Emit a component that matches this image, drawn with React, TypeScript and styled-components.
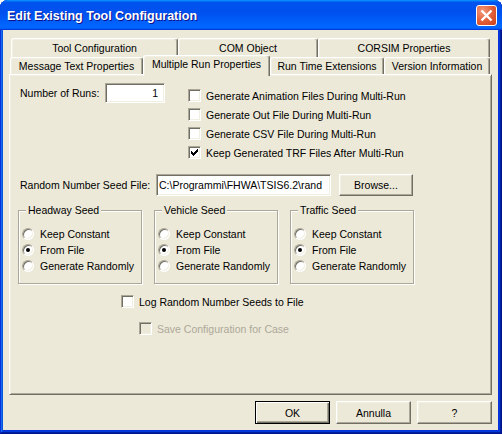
import React from "react";
import styled, { createGlobalStyle, css } from "styled-components";

const face = "#ECE9D8";
const light = "#F1EFE2";
const shadow = "#ACA899";
const dark = "#716F64";
const UI_FONT = `"Liberation Sans", Arial, sans-serif`;

const GlobalStyle = createGlobalStyle`
  html, body { margin: 0; padding: 0; background: #ffffff; }
  body { font-family: ${UI_FONT}; font-size: 10.5px; color: #000; }
  * { box-sizing: border-box; }
`;

const Window = styled.div`
  width: 502px;
  height: 434px;
  display: flex;
  flex-direction: column;
  background: #0831d9;
  border-radius: 8px 8px 0 0;
  overflow: hidden;
  box-shadow: inset -1px -1px #00138c, inset 1px 1px #0831d9, inset -2px -2px #001ea0,
    inset 2px 2px #166aee, inset -3px -3px #003bda, inset 3px 3px #0855dd;
`;

const TitleBar = styled.div`
  height: 30px;
  flex: none;
  display: flex;
  align-items: center;
  justify-content: space-between;
  padding: 0 5px 0 7px;
  background: linear-gradient(
    180deg,
    #0997ff,
    #0053ee 8%,
    #0050ee 40%,
    #0066ff 88%,
    #0066ff 93%,
    #005bff 95%,
    #003dd7 96%,
    #003dd7
  );
`;

const Title = styled.span`
  font: bold 12.5px ${UI_FONT};
  color: #fff;
  text-shadow: 1px 1px #0f1089;
  margin-top: 2px;
  white-space: nowrap;
`;

const CloseButton = styled.div`
  width: 21px;
  height: 21px;
  border: 1px solid #fff;
  border-radius: 3px;
  background: radial-gradient(circle at 30% 28%, #f39a7c 0%, #e2603a 50%, #cc4118 100%);
  display: flex;
  align-items: center;
  justify-content: center;
`;

const Body = styled.div`
  flex: 1;
  margin: 0 4px 4px 3px;
  background: ${face};
  display: flex;
  flex-direction: column;
  padding: 8px 6px 0;
`;

const TabRow = styled.div<{ $indent: number; $h: number }>`
  display: flex;
  flex: none;
  height: ${(p) => p.$h}px;
  margin-left: ${(p) => p.$indent}px;
`;

const Tab = styled.div<{ $w: number; $sel?: boolean }>`
  width: ${(p) => p.$w}px;
  flex: none;
  display: flex;
  align-items: center;
  justify-content: center;
  white-space: nowrap;
  background: ${face};
  border-left: 1px solid #fff;
  border-top: 1px solid #fff;
  border-right: 1px solid ${dark};
  border-radius: 3px 3px 0 0;
  box-shadow: inset -1px 0 ${shadow}, inset 1px 1px ${light};
  ${(p) =>
    p.$sel &&
    css`
      position: relative;
      z-index: 1;
      margin-top: -2px;
      margin-bottom: -2px;
      padding-bottom: 4px;
    `}
`;

const Panel = styled.div`
  flex: none;
  height: 321px;
  border: 1px solid;
  border-color: #fff ${dark} ${dark} #fff;
  box-shadow: inset 1px 1px ${light}, inset -1px -1px ${shadow};
  display: flex;
  flex-direction: column;
  align-items: flex-start;
`;

const RunsRow = styled.div`
  display: flex;
  align-items: flex-start;
  margin: 8px 0 0 10px;
`;

const FieldLabel = styled.span<{ $w: number }>`
  width: ${(p) => p.$w}px;
  flex: none;
  display: flex;
  align-items: center;
  align-self: stretch;
  white-space: nowrap;
`;

const LabeledField = styled.div<{ $h: number }>`
  display: flex;
  align-items: center;
  height: ${(p) => p.$h}px;
`;

const TextBox = styled.input<{ $w: number; $h: number; $right?: boolean }>`
  width: ${(p) => p.$w}px;
  height: ${(p) => p.$h}px;
  flex: none;
  font: 10.5px ${UI_FONT};
  color: #000;
  background: #fff;
  border: 1px solid;
  border-color: ${shadow} #fff #fff ${shadow};
  box-shadow: inset 1px 1px ${dark}, inset -1px -1px ${light};
  padding: ${(p) => (p.$right ? "0 6px 0 2px" : "0 1px 0 2px")};
  text-align: ${(p) => (p.$right ? "right" : "left")};
  outline: none;
  margin: 0;
`;

const CheckList = styled.div`
  display: flex;
  flex-direction: column;
  gap: 6px;
  margin: 6px 0 0 23px;
`;

const OptionLine = styled.div<{ $top: number; $indent: number }>`
  margin: ${(p) => p.$top}px 0 0 ${(p) => p.$indent}px;
`;

const CheckRow = styled.label<{ $disabled?: boolean }>`
  display: flex;
  align-items: center;
  gap: 5px;
  height: 13px;
  white-space: nowrap;
  color: ${(p) => (p.$disabled ? shadow : "#000")};
`;

const Box = styled.span<{ $disabled?: boolean }>`
  width: 13px;
  height: 13px;
  flex: none;
  display: flex;
  align-items: center;
  justify-content: center;
  border: 1px solid;
  border-color: ${shadow} #fff #fff ${shadow};
  box-shadow: inset 1px 1px ${dark}, inset -1px -1px ${light};
  background: ${(p) => (p.$disabled ? face : "#fff")};
`;

const SeedRow = styled.div`
  display: flex;
  align-items: center;
  height: 22px;
  margin: 15px 0 0 10px;
`;

const PushButton = styled.button<{ $w: number; $h: number; $default?: boolean }>`
  width: ${(p) => p.$w}px;
  height: ${(p) => p.$h}px;
  flex: none;
  font: 10.5px ${UI_FONT};
  color: #000;
  background: ${face};
  padding: 0;
  margin: 0;
  border: 1px solid;
  border-color: #fff ${dark} ${dark} #fff;
  box-shadow: inset -1px -1px ${shadow}, inset 1px 1px ${light};
  ${(p) =>
    p.$default &&
    css`
      border-color: #000;
      box-shadow: inset 1px 1px #fff, inset -1px -1px ${dark}, inset -2px -2px ${shadow};
    `}
`;

const BrowseButton = styled(PushButton)`
  margin-left: 8px;
`;

const GroupRow = styled.div`
  display: flex;
  gap: 12px;
  margin: 8px 0 0 8px;
`;

const Group = styled.div`
  width: 124px;
  height: 74px;
  margin-top: 6px;
  border: 1px solid ${shadow};
  box-shadow: inset 1px 1px #fff, 1px 1px #fff;
  padding-left: 3px;
  display: flex;
  flex-direction: column;
`;

const GroupTitle = styled.span`
  align-self: flex-start;
  margin: -7px 0 0 4px;
  padding: 0 2px;
  line-height: 12px;
  background: ${face};
  white-space: nowrap;
`;

const RadioList = styled.div`
  display: flex;
  flex-direction: column;
  margin-top: 10px;
`;

const RadioRow = styled.label`
  display: flex;
  align-items: center;
  gap: 6px;
  height: 16px;
  white-space: nowrap;
`;

const RadioDot = styled.span<{ $checked?: boolean }>`
  width: 12px;
  height: 12px;
  flex: none;
  border-radius: 50%;
  border: 1px solid;
  border-color: ${shadow} #fff #fff ${shadow};
  box-shadow: inset 1px 1px ${dark}, inset -1px -1px ${light};
  background: #fff;
  display: flex;
  align-items: center;
  justify-content: center;
  &::after {
    content: "";
    width: 4px;
    height: 4px;
    border-radius: 50%;
    background: #000;
    display: ${(p) => (p.$checked ? "block" : "none")};
  }
`;

const ButtonRow = styled.div`
  display: flex;
  justify-content: flex-end;
  gap: 6px;
  margin-top: 6px;
`;

const CHECK_PIXELS: [number, number][] = [
  [6, 0],
  [5, 1], [6, 1],
  [0, 2], [4, 2], [5, 2], [6, 2],
  [0, 3], [1, 3], [3, 3], [4, 3], [5, 3],
  [0, 4], [1, 4], [2, 4], [3, 4], [4, 4],
  [1, 5], [2, 5], [3, 5],
  [2, 6],
];
const CHECK_PATH = CHECK_PIXELS.map(([x, y]) => `M${x} ${y}h1v1h-1z`).join("");

function CheckMark({ color }: { color: string }) {
  return (
    <svg width="7" height="7" viewBox="0 0 7 7" shapeRendering="crispEdges">
      <path d={CHECK_PATH} fill={color} />
    </svg>
  );
}

function CheckOption({
  label,
  checked,
  disabled,
}: {
  label: string;
  checked?: boolean;
  disabled?: boolean;
}) {
  return (
    <CheckRow $disabled={disabled}>
      <Box $disabled={disabled}>{checked && <CheckMark color={disabled ? shadow : "#000"} />}</Box>
      <span>{label}</span>
    </CheckRow>
  );
}

function SeedGroup({ title }: { title: string }) {
  const options = ["Keep Constant", "From File", "Generate Randomly"];
  return (
    <Group>
      <GroupTitle>{title}</GroupTitle>
      <RadioList>
        {options.map((o) => (
          <RadioRow key={o}>
            <RadioDot $checked={o === "From File"} />
            <span>{o}</span>
          </RadioRow>
        ))}
      </RadioList>
    </Group>
  );
}

const TOP_TABS = [
  { label: "Tool Configuration", w: 167 },
  { label: "COM Object", w: 140 },
  { label: "CORSIM Properties", w: 172 },
];
const FRONT_TABS = [
  { label: "Message Text Properties", w: 133 },
  { label: "Multiple Run Properties", w: 127, sel: true },
  { label: "Run Time Extensions", w: 114 },
  { label: "Version Information", w: 106 },
];

export default function App() {
  return (
    <>
      <GlobalStyle />
      <Window>
        <TitleBar>
          <Title>Edit Existing Tool Configuration</Title>
          <CloseButton>
            <svg width="19" height="19" viewBox="0 0 19 19">
              <path d="M4.5 4.5L14.5 14.5M14.5 4.5L4.5 14.5" stroke="#fff" strokeWidth="2.4" />
            </svg>
          </CloseButton>
        </TitleBar>
        <Body>
          <TabRow $indent={2} $h={19}>
            {TOP_TABS.map((t) => (
              <Tab key={t.label} $w={t.w}>
                {t.label}
              </Tab>
            ))}
          </TabRow>
          <TabRow $indent={1} $h={17}>
            {FRONT_TABS.map((t) => (
              <Tab key={t.label} $w={t.w} $sel={t.sel}>
                {t.label}
              </Tab>
            ))}
          </TabRow>
          <Panel>
            <RunsRow>
              <LabeledField $h={20}>
                <FieldLabel $w={85}>Number of Runs:</FieldLabel>
                <TextBox $w={60} $h={20} $right readOnly defaultValue="1" />
              </LabeledField>
              <CheckList>
                <CheckOption label="Generate Animation Files During Multi-Run" />
                <CheckOption label="Generate Out File During Multi-Run" />
                <CheckOption label="Generate CSV File During Multi-Run" />
                <CheckOption label="Keep Generated TRF Files After Multi-Run" checked />
              </CheckList>
            </RunsRow>
            <SeedRow>
              <FieldLabel $w={136}>Random Number Seed File:</FieldLabel>
              <TextBox $w={175} $h={22} readOnly defaultValue={"C:\\Programmi\\FHWA\\TSIS6.2\\rand"} />
              <BrowseButton $w={74} $h={22}>
                Browse...
              </BrowseButton>
            </SeedRow>
            <GroupRow>
              <SeedGroup title="Headway Seed" />
              <SeedGroup title="Vehicle Seed" />
              <SeedGroup title="Traffic Seed" />
            </GroupRow>
            <OptionLine $top={11} $indent={111}>
              <CheckOption label="Log Random Number Seeds to File" />
            </OptionLine>
            <OptionLine $top={14} $indent={129}>
              <CheckOption label="Save Configuration for Case" disabled />
            </OptionLine>
          </Panel>
          <ButtonRow>
            <PushButton $w={75} $h={23} $default>
              OK
            </PushButton>
            <PushButton $w={75} $h={23}>
              Annulla
            </PushButton>
            <PushButton $w={75} $h={23}>
              ?
            </PushButton>
          </ButtonRow>
        </Body>
      </Window>
    </>
  );
}
